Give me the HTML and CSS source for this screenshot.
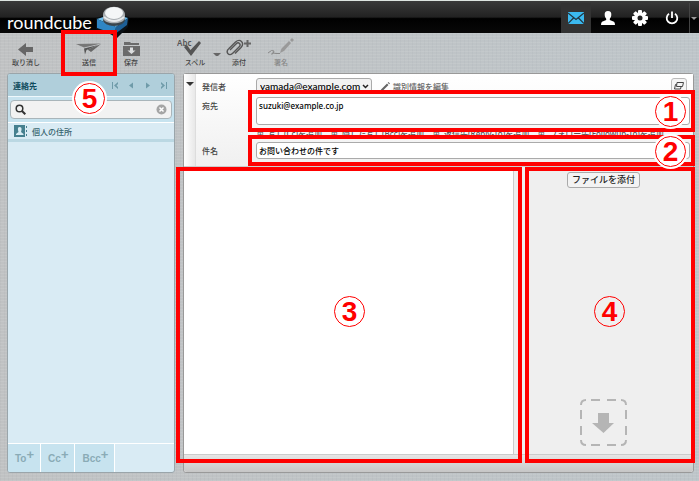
FILE: index.html
```html
<!DOCTYPE html>
<html lang="ja">
<head>
  <meta charset="UTF-8" />
  <meta name="viewport" content="width=device-width, initial-scale=1" />
  <title>Roundcube - メール作成</title>
  <link rel="stylesheet" href="styles.css">
</head>
<body>
  <header class="topbar">
    <a href="#" class="logo">
      <span class="logo-text">roundcube</span>
      <svg class="logo-cube" width="34" height="32" viewBox="0 0 34 32">
        <path d="M0 12 L17 7 L33 11 L32 21 L21 32 L14 28 L0 23Z" fill="#0b1116"/>
        <path d="M1 13 L17 8 L32 12 L20 21Z" fill="#6fbdea"/>
        <path d="M1 13 L20 21 L19 28 L1 22Z" fill="#2f86c4"/>
        <path d="M20 21 L32 12 L31 19 L19 28Z" fill="#1d5f96"/>
        <ellipse cx="18" cy="14" rx="11" ry="6" fill="#39454d"/>
        <path d="M7 9 C7 -2 29 -2 29 9 V12 C28 19 8 19 7 12Z" fill="#a9aeb2"/>
        <ellipse cx="18" cy="7" rx="9" ry="6" fill="#f4f6f7"/>
        <path d="M8 11 Q18 19 28 11" fill="none" stroke="#e6e9eb" stroke-width="2"/>
      </svg>
    </a>
    <nav class="tasks">
      <a href="#" class="task selected" aria-label="メール">
        <svg width="16" height="12" viewBox="0 0 16 12"><rect width="16" height="12" fill="#3bb9ef"/><path d="M0 1 L8 7.500 L16 1 M0 11.500 L5.500 6 M16 11.500 L10.500 6" fill="none" stroke="#22343e" stroke-width="1.200"/></svg>
      </a>
      <a href="#" class="task" aria-label="アドレス帳">
        <svg width="14" height="14" viewBox="0 0 14 14"><path d="M7 0 C9.500 0 10.500 1.500 10.300 4 C10.200 6 9.500 7 8.800 7.700 V9 L13 10.800 Q14 11.500 14 14 H0 Q0 11.500 1 10.800 L5.200 9 V7.700 C4.500 7 3.800 6 3.700 4 C3.500 1.500 4.500 0 7 0Z" fill="#fff"/></svg>
      </a>
      <a href="#" class="task" aria-label="設定">
        <svg width="16" height="16" viewBox="-8 -8 16 16"><g fill="#fff"><rect x="-2" y="-8" width="4" height="16" rx="1"/><rect x="-2" y="-8" width="4" height="16" rx="1" transform="rotate(45)"/><rect x="-2" y="-8" width="4" height="16" rx="1" transform="rotate(90)"/><rect x="-2" y="-8" width="4" height="16" rx="1" transform="rotate(135)"/></g><circle r="4.300" fill="none" stroke="#fff" stroke-width="3"/><circle r="2.500" fill="#222"/></svg>
      </a>
      <a href="#" class="task" aria-label="ログアウト">
        <svg width="14" height="14" viewBox="0 0 14 14"><path d="M4 2.800 A5.300 5.300 0 1 0 10 2.800 M7 0.500 V7" fill="none" stroke="#fff" stroke-width="1.800"/></svg>
      </a>
      <button type="button" class="task-more" aria-label="その他"><span class="caret"></span></button>
    </nav>
  </header>

  <div class="toolbar">
    <div class="tools">
      <button type="button" class="tool">
        <svg width="16" height="13" viewBox="0 0 16 13"><path d="M0 6.500 L8 0 V4 H15 V9 H8 V13Z" fill="#666"/></svg>
        取り消し
      </button>
    </div>
    <div class="tools">
      <button type="button" class="tool send">
        <svg width="26" height="13" viewBox="0 0 26 13"><path d="M0 1 L25 0.500 L8 4.500Z" fill="#777"/><path d="M25 1 L15 9 L11.500 6.500Z" fill="#666"/><path d="M8 5.500 L22 2 L10.500 7 L9 11.500Z" fill="#555"/></svg>
        送信
        <span class="frame"></span>
        <span class="num halo">5</span>
      </button>
      <button type="button" class="tool">
        <svg width="17" height="14" viewBox="0 0 17 14"><path d="M1 0 H7 L8 1 H16 V3 H1Z M0 4 H17 V14 H0Z" fill="#6b6b6b"/><path d="M7 5.500 H10 V8.500 H12.500 L8.500 12 L4.500 8.500 H7Z" fill="#dcdedf"/></svg>
        保存
      </button>
    </div>
    <div class="tools write">
      <button type="button" class="tool">
        <svg width="36" height="18" viewBox="0 0 36 18"><text x="0" y="8" class="abc">Abc</text><path d="M7 9 L10 7 L13.500 12 L22 3 L24 5 L14 18Z" fill="#555"/></svg>
        スペル
      </button>
      <button type="button" class="split" aria-label="言語"><span class="caret"></span></button>
      <button type="button" class="tool">
        <svg width="26" height="17" viewBox="0 0 26 17"><g fill="none" stroke="#555" stroke-width="1.400"><path d="M4 11 L10 5 Q12 3 13.500 4.500 Q15 6 13 8 L7 14 Q4 17 1.800 14.500 Q0 12 3 9.500 L9.500 3 Q13 0 15.500 2.500 Q18 5 15 8.500 L9 14.500"/></g><path d="M21.500 1 V8 M18 4.500 H25" stroke="#666" stroke-width="2"/></svg>
        添付
      </button>
      <button type="button" class="tool" disabled>
        <svg width="26" height="18" viewBox="0 0 26 18"><path d="M0 15 Q4 11 6 13 Q5 17 3.500 16 Q4 14 8 15.500 H12" fill="none" stroke="#888" stroke-width="1"/><path d="M12 15 L13.500 10.500 L21 3 L23 5 L16 13Z M22 2 L24 0 L26 2 L24 4Z" fill="#999"/></svg>
        署名
      </button>
    </div>
  </div>

  <main class="content">
    <aside class="contacts">
      <div class="contacts-head">
        <h2>連絡先</h2>
        <div class="pager">
          <button type="button" aria-label="最初"><svg width="7" height="7" viewBox="0 0 7 7"><path d="M0 0 H1 V7 H0Z M6 0 L2 3.500 L6 7 V5 L4.500 3.500 L6 2Z"/></svg></button>
          <button type="button" aria-label="前"><svg width="7" height="7" viewBox="0 0 7 7"><path d="M5 0.500 L1 3.500 L5 6.500Z"/></svg></button>
          <button type="button" aria-label="次"><svg width="7" height="7" viewBox="0 0 7 7"><path d="M2 0.500 L6 3.500 L2 6.500Z"/></svg></button>
          <button type="button" aria-label="最後"><svg width="7" height="7" viewBox="0 0 7 7"><path d="M7 0 H6 V7 H7Z M1 0 L5 3.500 L1 7 V5 L2.500 3.500 L1 2Z"/></svg></button>
        </div>
      </div>
      <div class="search">
        <div class="search-box">
          <svg width="11" height="11" viewBox="0 0 11 11"><circle cx="4.500" cy="4.500" r="3.300" fill="none" stroke="#333" stroke-width="1.500"/><path d="M7 7 L10.300 10.300" stroke="#333" stroke-width="2"/></svg>
          <input type="text" aria-label="連絡先を検索">
          <button type="button" aria-label="クリア"><svg width="11" height="11" viewBox="0 0 11 11"><circle cx="5.500" cy="5.500" r="5" fill="#a5a5a5"/><path d="M3.500 3.500 L7.500 7.500 M7.500 3.500 L3.500 7.500" stroke="#fff" stroke-width="1.500"/></svg></button>
        </div>
      </div>
      <ul class="sources">
        <li><a href="#">
          <svg width="13" height="12" viewBox="0 0 13 12"><path d="M0 0 H11 V12 H0Z" fill="#46808f"/><path d="M5.500 2 Q8 2 7.500 5 L7 7 L9.500 9 V10 H2 V9 L4.500 7 L4 5 Q3.500 2 5.500 2Z" fill="#d9ecf4"/><path d="M12.500 1 V11" stroke="#46808f" stroke-dasharray="2 2"/></svg>
          個人の住所</a></li>
      </ul>
      <div class="contacts-foot">
        <button type="button">To<span>+</span></button>
        <button type="button">Cc<span>+</span></button>
        <button type="button">Bcc<span>+</span></button>
      </div>
    </aside>

    <form class="compose">
      <div class="headers">
        <button type="button" class="fold" aria-label="ヘッダー表示"><span class="caret dark"></span></button>
        <div class="fields">
          <label for="from">発信者</label>
          <div class="from-row">
            <select id="from"><option>yamada@example.com</option></select>
            <a href="#" class="edit">
              <svg width="10" height="10" viewBox="0 0 10 10"><path d="M0 10 L1 7.500 L7 1.500 L8.500 3 L2.500 9Z M7.700 0.800 L8.500 0 L10 1.500 L9.200 2.300Z" fill="#666"/></svg>
              識別情報を編集</a>
            <button type="button" class="popout" aria-label="新しいウィンドウで開く">
              <svg width="10" height="8" viewBox="0 0 10 8"><path d="M3 0.500 H9.500 L8.500 4.500 H2.500Z M2.500 2.500 H1.500 L0.500 7 H6.500 L7 5" fill="none" stroke="#444"/></svg>
            </button>
          </div>

          <label for="to">宛先</label>
          <div class="field">
            <textarea id="to" rows="1">suzuki@example.co.jp</textarea>
            <span class="frame"></span>
            <span class="num halo">1</span>
          </div>

          <div class="add-links">
            <a href="#">写し(Cc)を追加</a>
            <a href="#">隠した写し(Bcc)を追加</a>
            <a href="#">返信先(Reply-To)を追加</a>
            <a href="#">フォロー先(Followup-To)を追加</a>
          </div>

          <label for="subject">件名</label>
          <div class="field">
            <input id="subject" type="text" value="お問い合わせの件です">
            <span class="frame"></span>
            <span class="num halo">2</span>
          </div>
        </div>
      </div>

      <div class="body-row">
        <div class="message">
          <textarea aria-label="本文"></textarea>
          <span class="frame"></span>
          <span class="num">3</span>
        </div>
        <div class="attachments">
          <button type="button" class="attach">ファイルを添付</button>
          <svg width="47" height="47" viewBox="0 0 47 47">
            <path d="M1 6 Q1 1 6 1 M11 1 H20 M27 1 H36 M41 1 Q46 1 46 6 M46 11 V20 M46 27 V36 M46 41 Q46 46 41 46 M36 46 H27 M20 46 H11 M6 46 Q1 46 1 41 M1 36 V27 M1 20 V11" fill="none" stroke="#b5b5b5" stroke-width="2"/>
            <path d="M18 14 H29 V24 H34 L23.500 34 L12 24 H18Z" fill="#b5b5b5"/>
          </svg>
          <span class="frame"></span>
          <span class="num">4</span>
        </div>
      </div>
      <div class="compose-foot"></div>
    </form>
  </main>
</body>
</html>
```

FILE: styles.css
```css
* {
  box-sizing: border-box;
}
body {
  margin: 0;
  height: 100vh;
  display: flex;
  flex-direction: column;
  font-family: "Noto Sans", "Noto Sans CJK JP", sans-serif;
  font-size: 8px;
  font-weight: 500;
  color: #333;
  background:
    repeating-linear-gradient(0deg, rgba(255,255,255,0.08) 0 1px, transparent 1px 3px),
    repeating-linear-gradient(90deg, rgba(90,100,110,0.04) 0 1px, transparent 1px 4px),
    linear-gradient(90deg, #c0c2c3, #bec5c9);
}
button, input, select, textarea {
  font: inherit;
  color: inherit;
  margin: 0;
}
button {
  padding: 0;
  border: none;
  background: none;
}
a {
  color: inherit;
  text-decoration: none;
}
svg {
  display: block;
  flex: none;
}

/* top bar */
.topbar {
  flex: none;
  height: 33px;
  display: flex;
  justify-content: space-between;
  padding: 2px 2px 0 7px;
  background: linear-gradient(#3a3a3a, #222 50%, #000 55%, #080808);
  border-top: 1px solid #dde4e0;
}
.logo {
  display: flex;
  gap: 4px;
  color: #fff;
}
.logo-text {
  font: 18px/38px Lato, sans-serif;
}
.logo-cube {
  margin-top: 3px;
  position: relative;
  z-index: 1;
}
.tasks {
  display: flex;
}
.task {
  width: 30px;
  margin-right: 2px;
  display: flex;
  align-items: center;
  justify-content: center;
}
.task.selected {
  background: #333;
}
.task-more {
  width: 8px;
  border-left: 1px solid #444;
  display: flex;
  align-items: center;
  justify-content: center;
}
.caret {
  border: 3px solid transparent;
  border-top-color: #999;
  border-bottom: none;
}
.caret.dark {
  border-width: 4px 4px 0;
  border-top-color: #333;
}

/* toolbar */
.toolbar {
  flex: none;
  height: 40px;
  display: flex;
  padding: 1px 8px;
}
.tools {
  display: flex;
  margin-right: 21px;
}
.write {
  margin-left: 7px;
}
.tool {
  position: relative;
  width: 36px;
  display: flex;
  flex-direction: column;
  align-items: center;
  justify-content: flex-end;
  gap: 1px;
  padding-bottom: 4px;
  font-size: 7px;
  line-height: 11px;
  white-space: nowrap;
  color: #444;
}
.tool:disabled {
  margin-left: 6px;
  color: #888;
}
.tool.send {
  width: 48px;
}
.split {
  width: 8px;
  padding-top: 2px;
}
.split .caret {
  display: block;
  border-top-color: #666;
}
.abc {
  font-family: "Noto Sans", sans-serif;
  font-size: 8px;
  font-weight: 600;
  fill: #555;
}

/* numbered marks over the screen */
.frame {
  position: absolute;
  inset: -4px;
  z-index: 2;
  border: 4px solid #f00;
  pointer-events: none;
}
.num {
  position: absolute;
  z-index: 3;
  top: 50%;
  left: 50%;
  width: 31px;
  height: 31px;
  margin: -15px 0 0 -15px;
  border: 1px solid #f00;
  border-radius: 50%;
  font: bold 28px/29px "Liberation Sans", sans-serif;
  text-align: center;
  color: #f00;
  pointer-events: none;
}
.halo {
  background: #fff;
  box-shadow: 0 0 0 2px #fff;
}
.send .num {
  top: 64px;
}

/* contacts */
.content {
  flex: 1;
  min-height: 0;
  display: flex;
  gap: 8px;
  padding: 0 5px 8px 7px;
}
.contacts {
  flex: none;
  width: 168px;
  display: flex;
  flex-direction: column;
  border: 1px solid #9aa5aa;
  border-radius: 3px;
  background: #d9ebf4;
  overflow: hidden;
}
.contacts-head {
  display: flex;
  align-items: center;
  justify-content: space-between;
  height: 22px;
  padding: 0 7px 0 5px;
  background: #b0cfdb;
}
.contacts-head h2 {
  margin: 0;
  font-size: 8px;
  color: #0d4a5c;
}
.pager {
  display: flex;
  gap: 9px;
}
.pager svg {
  fill: #6f9ba9;
}
.search {
  padding: 3px 2px;
  background: #c7e3ef;
  border-top: 1px solid #eef8fc;
}
.search-box {
  display: flex;
  align-items: center;
  height: 19px;
  padding: 0 4px;
  border: 1px solid #a9b5ba;
  border-radius: 4px;
  background: #f2f2f2;
}
.search-box input {
  flex: 1;
  min-width: 0;
  border: none;
  outline: none;
  background: none;
}
.sources {
  flex: 1;
  margin: 0;
  padding: 0;
  list-style: none;
}
.sources a {
  display: flex;
  align-items: center;
  gap: 5px;
  height: 20px;
  padding: 0 6px;
  border-top: 1px solid #fff;
  border-bottom: 3px solid #bbd8e3;
  color: #37646f;
}
.contacts-foot {
  display: flex;
  height: 29px;
  border-top: 1px solid #fff;
}
.contacts-foot button {
  display: flex;
  align-items: center;
  padding: 2px 6px 0 7px;
  border-right: 1px solid #fff;
  background: #c7e3ef;
  font: bold 10px/16px "Liberation Sans", sans-serif;
  color: #8aabb6;
}
.contacts-foot span {
  font-size: 13px;
  margin-bottom: 9px;
}

/* compose form */
.compose {
  flex: 1;
  min-width: 0;
  display: flex;
  flex-direction: column;
  border: 1px solid #999;
  border-radius: 3px;
  background: #efefef;
}
.headers {
  flex: none;
  display: flex;
  background: linear-gradient(#fff, #f0f0f0);
  border-bottom: 1px solid #ccc;
}
.fold {
  width: 12px;
  display: flex;
  justify-content: center;
  padding-top: 8px;
  border-right: 1px solid #ddd;
  background: linear-gradient(90deg, #fff, #e8e8e8);
}
.fields {
  flex: 1;
  min-width: 0;
  display: grid;
  grid-template-columns: 54px minmax(0, 1fr);
  grid-template-rows: 19px 28px 17px 17px;
  padding: 4px 3px 7px 6px;
}
.fields label {
  line-height: 17px;
  color: #444;
}
.from-row {
  display: flex;
  align-items: flex-start;
}
.from-row select {
  width: 116px;
  height: 16px;
  padding: 0 0 0 3px;
  border: 1px solid #aaa;
  border-radius: 3px;
  font-family: Lato, sans-serif;
  font-size: 10px;
  line-height: 14px;
  color: #000;
  appearance: none;
  background: url("data:image/svg+xml,%3Csvg xmlns='http://www.w3.org/2000/svg' width='7' height='5'%3E%3Cpath d='M1 1l2.500 2.500L6 1' fill='none' stroke='%23222' stroke-width='1.500'/%3E%3C/svg%3E") no-repeat right 2px center #f2f2f2;
}
.edit {
  display: flex;
  align-items: center;
  gap: 3px;
  margin-left: 8px;
  line-height: 17px;
  color: #666;
}
.popout {
  margin-left: auto;
  margin-right: 3px;
  width: 16px;
  height: 15px;
  display: flex;
  align-items: center;
  justify-content: center;
  border: 1px solid #bbb;
  border-radius: 3px;
  background: #f5f5f5;
}
.field {
  position: relative;
  display: flex;
}
.field textarea, .field input {
  flex: 1;
  min-width: 0;
  padding: 1px 2px;
  border: 1px solid #aaa;
  border-radius: 3px;
  background: #fff;
  line-height: 13px;
  font-weight: 500;
  color: #000;
  resize: none;
  overflow: hidden;
}
.field .frame {
  inset: -7px -5px -7px -8px;
}
.field .num {
  left: auto;
  right: 4px;
}
.add-links {
  grid-column: 2;
  display: flex;
  gap: 9px;
  padding-left: 1px;
  line-height: 17px;
  white-space: nowrap;
  color: #555;
}
.add-links a::before {
  content: "⊞";
  margin-right: 4px;
}

/* message and attachments */
.body-row {
  flex: 1;
  min-height: 0;
  display: flex;
  gap: 11px;
}
.message {
  position: relative;
  flex: 1;
  display: flex;
}
.message textarea {
  flex: 1;
  min-width: 0;
  padding: 4px;
  border: none;
  border-right: 1px solid #ccc;
  background: #fff;
  resize: none;
}
.message .frame {
  inset: 0 -8px -9px -8px;
}
.attachments {
  position: relative;
  flex: 0 0 33%;
  display: flex;
  flex-direction: column;
  align-items: center;
  justify-content: space-between;
  padding: 5px 11px 8px 0;
}
.attachments .frame {
  inset: 0 -2px -9px 0;
}
.attach {
  height: 16px;
  padding: 0 4px;
  border: 1px solid #aaa;
  border-radius: 3px;
  background: #f3f3f3;
  font-size: 9px;
  line-height: 14px;
  color: #222;
}
.compose-foot {
  flex: none;
  height: 18px;
  border-top: 1px solid #ccc;
  border-radius: 0 0 3px 3px;
  background: linear-gradient(#e6e6e6, #c6c6c6);
}
```
